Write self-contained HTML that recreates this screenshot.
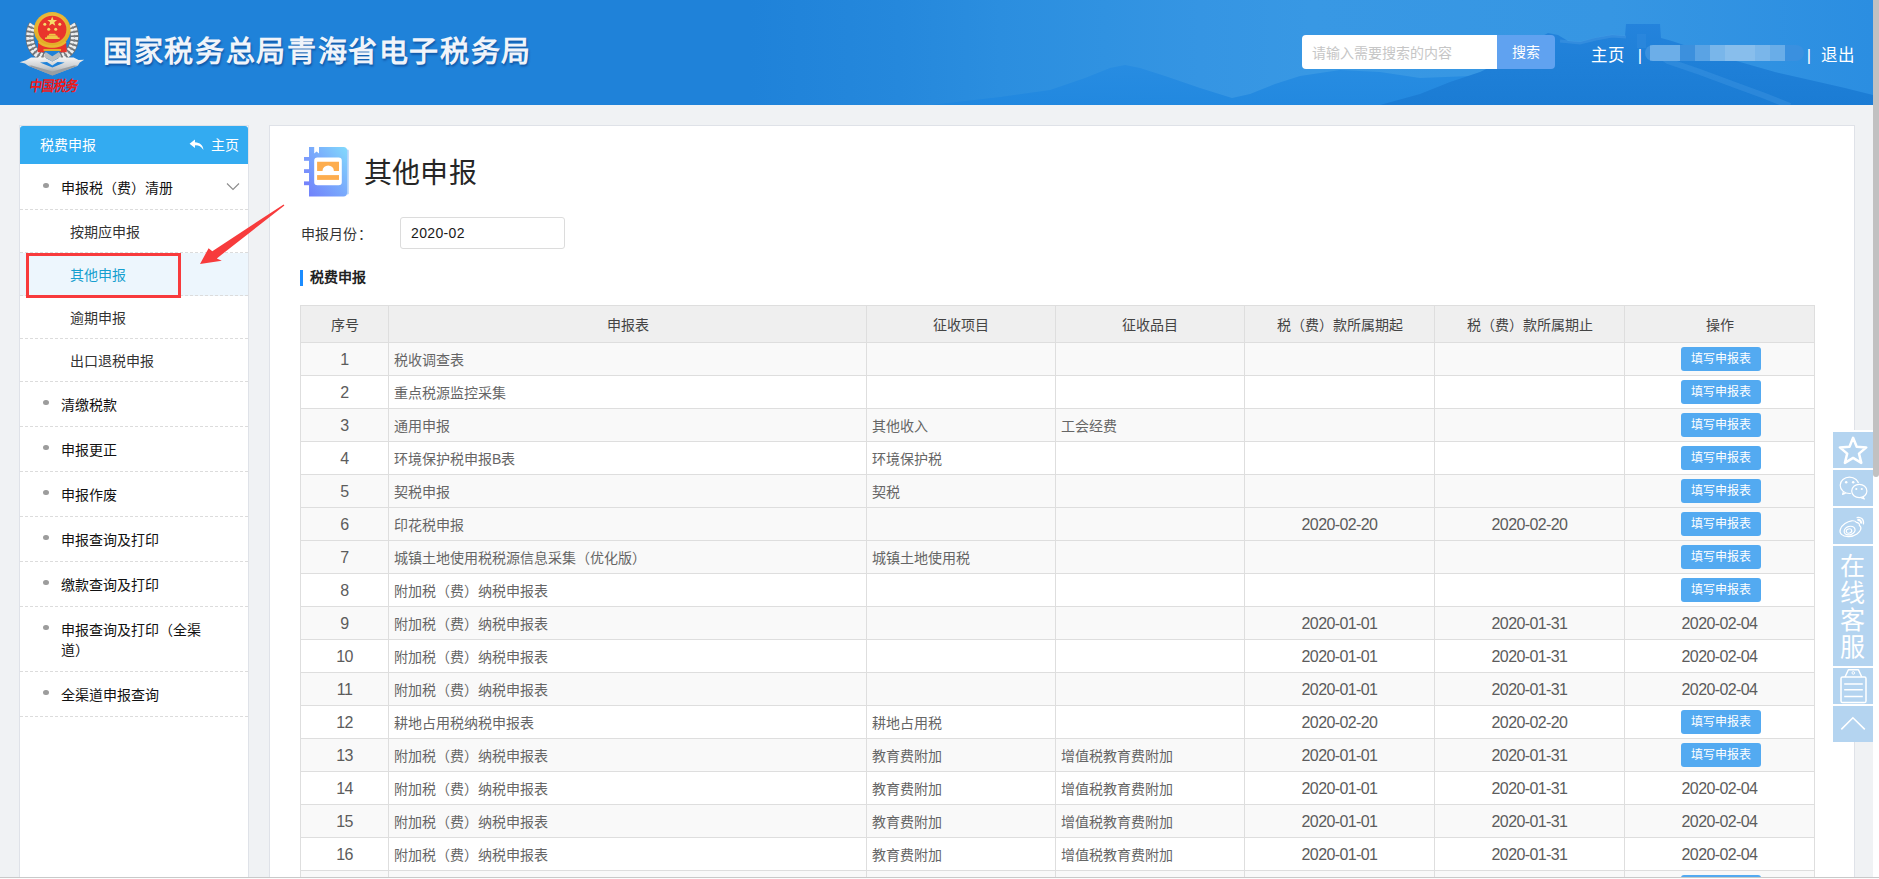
<!DOCTYPE html>
<html lang="zh-CN">
<head>
<meta charset="utf-8">
<title>国家税务总局青海省电子税务局</title>
<style>
*{box-sizing:border-box;margin:0;padding:0}
html,body{width:1879px;height:879px;overflow:hidden}
body{position:relative;background:#f0f2f4;font-family:"Liberation Sans",sans-serif;font-size:14px;color:#333}
.abs{position:absolute}
/* header */
#hd{position:absolute;left:0;top:0;width:1873px;height:105px;background:#1f82d9;overflow:hidden}
#hd svg.bg{position:absolute;left:0;top:0}
#title{position:absolute;left:103px;top:32px;height:40px;line-height:40px;font-size:29px;font-weight:bold;color:#f0f4fa;letter-spacing:1.65px;white-space:nowrap;text-shadow:1px 2px 2px rgba(0,40,110,.45)}
#sbox{position:absolute;left:1302px;top:35px;width:195px;height:34px;background:#fff;border-radius:4px 0 0 4px;color:#c6c6c6;font-size:14px;line-height:36px;padding-left:10px;white-space:nowrap}
#sbtn{position:absolute;left:1497px;top:35px;width:58px;height:34px;background:#60a2f0;border-radius:0 4px 4px 0;color:#fff;font-size:14px;line-height:35.5px;text-align:center}
.nav{position:absolute;top:43px;height:24px;line-height:24px;font-size:16.5px;color:#fff;white-space:nowrap}
/* sidebar */
#side{position:absolute;left:19px;top:125px;width:230px;height:760px;background:#fff;border:1px solid #dfe2e8}
#side .sh{position:absolute;left:0;top:0;width:228px;height:38px;background:#33abf1;color:#fff;line-height:38px;border-radius:3px 3px 0 0}
.mi{position:absolute;left:0;width:228px;border-bottom:1px dashed #dcdcdc;color:#111;white-space:nowrap}
.mi .t{position:absolute;left:40.5px;top:1px}
.mi i{position:absolute;left:23px;width:6px;height:5.4px;border-radius:50%;background:#9c9c9c}
.si{position:absolute;left:0;width:228px;height:43px;line-height:44px;border-bottom:1px dashed #dcdcdc;padding-left:50px;color:#333;white-space:nowrap}
/* content */
#main{position:absolute;left:269px;top:125px;width:1586px;height:760px;background:#fff;border:1px solid #dfe2e8}
#ptitle{position:absolute;left:364px;top:154px;height:40px;line-height:40px;font-size:28px;letter-spacing:.2px;color:#262626;white-space:nowrap;font-weight:300}
#tb{position:absolute;left:300px;top:305px;width:1515px;border-collapse:separate;border-spacing:0;table-layout:fixed;border-left:1px solid #dedede;border-top:1px solid #dedede;color:#666;font-size:14px}
#tb th,#tb td{border-right:1px solid #dedede;border-bottom:1px solid #dedede;height:33px;padding:0;font-weight:normal;white-space:nowrap;overflow:hidden;vertical-align:middle;text-align:center}
#tb th{height:37px;background:#efefef;color:#444}
#tb td.l{text-align:left;padding-left:5px}
#tb tr.o td{background:#f9f9f9}
#tb .n{font-size:16px;letter-spacing:-.6px;color:#5c5c5c;padding-top:1px}
.b{display:block;position:relative;left:1px;margin:0 auto;width:80px;height:24px;line-height:24px;background:#53aaf1;color:#fff;font-size:12px;border-radius:3px;text-align:center}
/* toolbar */
.tl{position:absolute;left:1833px;width:40px;background:#b4d4f0}
</style>
</head>
<body>
<div id="hd">
<svg class="bg" width="1873" height="105" viewBox="0 0 1873 105">
<defs>
<linearGradient id="sky" x1="0" y1="0" x2="1" y2="0">
<stop offset="0" stop-color="#1f82d9"/><stop offset=".4" stop-color="#1f82d9"/><stop offset=".48" stop-color="#2588dc"/><stop offset=".534" stop-color="#2b8edf"/><stop offset=".59" stop-color="#3092e1"/><stop offset=".64" stop-color="#3595e3"/><stop offset=".7" stop-color="#3898e4"/><stop offset=".86" stop-color="#3696e3"/><stop offset="1" stop-color="#2b8ee1"/>
</linearGradient>
<linearGradient id="mt" x1="0" y1="0" x2="0" y2="1">
<stop offset="0" stop-color="#2483dc"/><stop offset=".45" stop-color="#1f80d8"/><stop offset="1" stop-color="#1b7cd4"/>
</linearGradient>
<linearGradient id="mt2" x1="0" y1="0" x2="0" y2="1">
<stop offset="0" stop-color="#278ce2"/><stop offset="1" stop-color="#2087df"/>
</linearGradient>
</defs>
<rect width="1873" height="105" fill="url(#sky)"/>
<path d="M930 105 L1000 97 L1050 90 L1085 78 L1110 68 L1125 65 L1140 68 L1165 76 L1200 88 L1232 98 L1250 94 L1275 84 L1300 76 L1340 70 L1380 72 L1420 78 L1470 76 L1520 66 L1560 60 L1600 62 L1660 64 L1700 105 Z" fill="url(#mt2)" opacity=".9"/>
<path d="M1380 105 L1420 94 L1450 82 L1480 72 L1505 60 L1520 50 L1535 40 L1548 33 L1558 35 L1568 41 L1580 42 L1595 38 L1612 35 L1625 36 L1626 24 L1660 24 L1661 38 L1672 41 L1690 47 L1712 55 L1740 62 L1775 72 L1810 80 L1845 88 L1873 95 L1873 105 Z" fill="url(#mt)"/>
<path d="M1652 50 L1668 61 L1700 72 L1735 85 L1765 96 L1790 106" fill="none" stroke="#4b9ee6" stroke-width="6" opacity=".32"/>
<path d="M1560 41 L1580 43 L1596 39 L1612 36 L1626 37" fill="none" stroke="#5aa6e8" stroke-width="3" opacity=".3"/>
<rect x="1637" y="34" width="9" height="14" fill="#3c93e0" opacity=".3"/>
</svg>
<svg class="abs" style="left:12px;top:4px" width="80" height="96" viewBox="12 4 80 96">
<defs>
<radialGradient id="gold" cx=".5" cy=".4" r=".6"><stop offset="0" stop-color="#f7d25a"/><stop offset="1" stop-color="#dfa81f"/></radialGradient>
<linearGradient id="silv" x1="0" y1="0" x2="0" y2="1"><stop offset="0" stop-color="#f4f4f4"/><stop offset=".55" stop-color="#c9cccf"/><stop offset="1" stop-color="#8e9296"/></linearGradient>
</defs>
<g fill="none" stroke-linecap="butt">
<path d="M33 24.6 C28.4 32 28.6 45.4 35.6 52.2 C38.8 55.4 42.6 57.2 47 57.6" stroke="#6f7377" stroke-width="8.6"/>
<path d="M71.4 24.6 C76 32 75.8 45.4 68.8 52.2 C65.6 55.4 61.8 57.2 57.4 57.6" stroke="#6f7377" stroke-width="8.6"/>
<path d="M33 24.6 C28.4 32 28.6 45.4 35.6 52.2 C38.8 55.4 42.6 57.2 47 57.6" stroke="#eceeef" stroke-width="7.2" stroke-dasharray="2.6 1.7"/>
<path d="M71.4 24.6 C76 32 75.8 45.4 68.8 52.2 C65.6 55.4 61.8 57.2 57.4 57.6" stroke="#eceeef" stroke-width="7.2" stroke-dasharray="2.6 1.7"/>
<path d="M33 24.6 C28.4 32 28.6 45.4 35.6 52.2 C38.8 55.4 42.6 57.2 47 57.6" stroke="#7d8185" stroke-width="1.3" stroke-dasharray="2.6 1.7" stroke-dashoffset="2.1"/>
<path d="M71.4 24.6 C76 32 75.8 45.4 68.8 52.2 C65.6 55.4 61.8 57.2 57.4 57.6" stroke="#7d8185" stroke-width="1.3" stroke-dasharray="2.6 1.7" stroke-dashoffset="2.1"/>
</g>
<path d="M38.4 40 H66 L66.8 52.3 H60.5 L59 50.6 H45.4 L43.9 52.3 H37.6 Z" fill="#e8342b"/>
<ellipse cx="52.2" cy="29.7" rx="18.3" ry="17.6" fill="url(#gold)"/>
<ellipse cx="52.2" cy="29.4" rx="14.2" ry="13.6" fill="#e9352c"/>
<path d="M39.6 40.6 C44 46.8 60.4 46.8 64.8 40.6 L66.4 42.6 C60.6 49.6 43.8 49.6 38 42.6 Z" fill="#e9b730"/>
<path d="M43.5 49 H61 V51 H43.5 Z" fill="#e3ac2a"/>
<path d="M45 39 H59.6 V37.4 H58 L57.2 35.4 H47.4 L46.6 37.4 H45 Z M48.6 35.2 L49.4 33.8 H55.2 L56 35.2 Z" fill="#f0c545"/>
<g fill="#f6dc6a">
<path d="M52.2 16.6 L53.5 20 L57.1 20.1 L54.3 22.3 L55.3 25.8 L52.2 23.8 L49.1 25.8 L50.1 22.3 L47.3 20.1 L50.9 20 Z"/>
<circle cx="44.8" cy="24.2" r="1.5"/><circle cx="59.8" cy="24.2" r="1.5"/><circle cx="48.7" cy="29.2" r="1.5"/><circle cx="55.7" cy="29.2" r="1.5"/>
</g>
<path d="M19.6 62.2 L26 60.2 L31 57.6 L44.6 57.4 L52.3 61.6 L60 57.4 L73.6 57.6 L78.6 60 L84.2 59.8 L79.8 62.6 L77.8 65.8 L52.4 75.4 L28.2 65.8 L25 63.4 Z" fill="url(#silv)"/>
<path d="M40 62.6 L47 62 L52.3 65.4 L57.6 62 L64.6 62.6 L52.4 67.6 Z" fill="#1f82d9"/>
<path d="M28.2 65.8 L52.4 75.4 L77.8 65.8 L74 65.6 L52.4 71.6 L31.6 65.6 Z" fill="#9a9ea2"/>
<path d="M45.6 52 L52.3 56.2 L59 52 L60.6 56.8 L52.3 61.6 L44 56.8 Z" fill="#b9bdc0"/>
</svg>
<div class="abs" style="left:24px;top:75.5px;width:59px;height:20px;line-height:20px;font-size:14.5px;font-weight:700;color:#ee1a1a;letter-spacing:0;white-space:nowrap;transform:scaleX(.86) skewX(-10deg);text-align:center">中国税务</div>
<div id="title">国家税务总局青海省电子税务局</div>
<div id="sbox">请输入需要搜索的内容</div>
<div id="sbtn">搜索</div>
<div class="nav" style="left:1590.5px">主页</div>
<div class="nav" style="left:1637.8px">|</div>
<div class="abs" style="left:1645px;top:44.5px;width:159px;height:16px;border-radius:8px;background:#3a90df;overflow:hidden;filter:blur(.4px)">
<i class="abs" style="left:5px;top:0;width:29.6px;height:16px;background:#6caee8"></i>
<i class="abs" style="left:34.6px;top:0;width:15.4px;height:16px;background:#3c90dd"></i>
<i class="abs" style="left:50px;top:0;width:14.7px;height:16px;background:#5aa3e4"></i>
<i class="abs" style="left:64.7px;top:0;width:15.4px;height:16px;background:#79b6ea"></i>
<i class="abs" style="left:80.1px;top:0;width:30.1px;height:16px;background:#88beec"></i>
<i class="abs" style="left:110.2px;top:0;width:14.6px;height:16px;background:#7ab6ea"></i>
<i class="abs" style="left:124.8px;top:0;width:15.5px;height:16px;background:#69ade8"></i>
</div>
<div class="nav" style="left:1806.8px">|</div>
<div class="nav" style="left:1820.5px">退出</div>
</div>

<div id="side">
<div class="sh"><span class="abs" style="left:20px">税费申报</span>
<svg class="abs" style="left:168.6px;top:12.8px" width="15.4" height="12" viewBox="0 0 16 12.4"><path d="M6.2 0.6 L0.6 5 L6.2 9.4 V6.6 C9.8 6.4 12.6 7.6 15 11.4 C14.6 6.6 11.4 3.6 6.2 3.4 Z" fill="#fff"/></svg>
<span class="abs" style="left:191px">主页</span></div>
<div class="mi" style="top:38px;height:46px;line-height:45px"><i style="top:19px"></i><span class="t" style="top:2px">申报税（费）清册</span>
<svg class="abs" style="left:205.6px;top:18px" width="14" height="10" viewBox="0 0 14 10"><path d="M1 1.5 L7 7.5 L13 1.5" fill="none" stroke="#8c8c8c" stroke-width="1.1"/></svg></div>
<div class="si" style="top:84px">按期应申报</div>
<div class="si" style="top:127px;background:#edf6fd;color:#159fcf">其他申报</div>
<div class="si" style="top:170px">逾期申报</div>
<div class="si" style="top:213px">出口退税申报</div>
<div class="mi" style="top:256px;height:45px;line-height:44px"><i style="top:17.8px"></i><span class="t">清缴税款</span></div>
<div class="mi" style="top:301px;height:45px;line-height:44px"><i style="top:17.8px"></i><span class="t">申报更正</span></div>
<div class="mi" style="top:346px;height:45px;line-height:44px"><i style="top:17.8px"></i><span class="t">申报作废</span></div>
<div class="mi" style="top:391px;height:45px;line-height:44px"><i style="top:17.8px"></i><span class="t">申报查询及打印</span></div>
<div class="mi" style="top:436px;height:45px;line-height:44px"><i style="top:17.8px"></i><span class="t">缴款查询及打印</span></div>
<div class="mi" style="top:481px;height:65px;line-height:20px"><i style="top:17.8px"></i><span class="t" style="top:13px">申报查询及打印（全渠<br>道）</span></div>
<div class="mi" style="top:546px;height:45px;line-height:44px"><i style="top:17.8px"></i><span class="t">全渠道申报查询</span></div>
</div>
<div class="abs" style="left:26px;top:253px;width:155px;height:45px;border:3px solid #f83a3c;z-index:5"></div>
<svg class="abs" style="left:195px;top:198px;z-index:5" width="95" height="72" viewBox="195 198 95 72"><path d="M283.6 204.4 L284.4 205.4 L216.8 258.4 L221.8 260.8 L200 264 L208.6 248.2 L212.3 251.2 Z" fill="#f73b3c"/></svg>

<div id="main"></div>
<svg class="abs" style="left:300px;top:144px" width="52" height="56" viewBox="300 144 52 56">
<defs><linearGradient id="nb" x1="1" y1="0" x2="0" y2="1"><stop offset="0" stop-color="#82dafc"/><stop offset=".45" stop-color="#7aaefc"/><stop offset="1" stop-color="#7182fb"/></linearGradient></defs>
<rect x="346" y="149.5" width="2.8" height="45" rx="1.2" fill="#b4d3fb"/>
<path d="M309 147 H343.5 A3.6 3.6 0 0 1 347.1 150.6 V192.8 A3.6 3.6 0 0 1 343.5 196.4 H309 Z" fill="url(#nb)"/>
<rect x="304" y="157" width="6" height="3.8" fill="#7b9cfc"/><rect x="304" y="169.2" width="6" height="3.8" fill="#7890fc"/><rect x="304" y="181.4" width="6" height="3.8" fill="#7584fc"/>
<path d="M314.2 146.6 H319 V153.4 L316.6 151.6 L314.2 153.4 Z" fill="#fff"/>
<rect x="314.2" y="157.6" width="27.6" height="27.6" rx="3.2" fill="#fff"/>
<path d="M317.1 161.8 H339 V171.1 H333.9 A5.7 5.7 0 0 0 322.5 171.1 H317.1 Z" fill="#fdad4e"/>
<rect x="317.1" y="175.1" width="21.9" height="4.8" fill="#fdad4e"/>
</svg>
<div id="ptitle">其他申报</div>
<div class="abs" style="left:300.5px;top:224px;line-height:20px;color:#333;white-space:nowrap;letter-spacing:.3px">申报月份：</div>
<div class="abs" style="left:400px;top:217px;width:165px;height:32px;border:1px solid #dcdcdc;border-radius:3px;background:#fff;line-height:30px;padding-left:10px;color:#1a1a1a;letter-spacing:.35px">2020-02</div>
<div class="abs" style="left:300px;top:270px;width:3px;height:16px;background:#1b8cff"></div>
<div class="abs" style="left:310px;top:267px;line-height:20px;font-weight:bold;color:#222;white-space:nowrap">税费申报</div>

<table id="tb">
<colgroup><col style="width:88px"><col style="width:478px"><col style="width:189px"><col style="width:189px"><col style="width:190px"><col style="width:190px"><col style="width:190px"></colgroup>
<tr><th>序号</th><th>申报表</th><th>征收项目</th><th>征收品目</th><th>税（费）款所属期起</th><th>税（费）款所属期止</th><th>操作</th></tr>
<tr class="o"><td class="n">1</td><td class="l">税收调查表</td><td class="l"></td><td class="l"></td><td class="n"></td><td class="n"></td><td><span class="b">填写申报表</span></td></tr>
<tr><td class="n">2</td><td class="l">重点税源监控采集</td><td class="l"></td><td class="l"></td><td class="n"></td><td class="n"></td><td><span class="b">填写申报表</span></td></tr>
<tr class="o"><td class="n">3</td><td class="l">通用申报</td><td class="l">其他收入</td><td class="l">工会经费</td><td class="n"></td><td class="n"></td><td><span class="b">填写申报表</span></td></tr>
<tr><td class="n">4</td><td class="l">环境保护税申报B表</td><td class="l">环境保护税</td><td class="l"></td><td class="n"></td><td class="n"></td><td><span class="b">填写申报表</span></td></tr>
<tr class="o"><td class="n">5</td><td class="l">契税申报</td><td class="l">契税</td><td class="l"></td><td class="n"></td><td class="n"></td><td><span class="b">填写申报表</span></td></tr>
<tr class="o"><td class="n">6</td><td class="l">印花税申报</td><td class="l"></td><td class="l"></td><td class="n">2020-02-20</td><td class="n">2020-02-20</td><td><span class="b">填写申报表</span></td></tr>
<tr class="o"><td class="n">7</td><td class="l">城镇土地使用税税源信息采集（优化版）</td><td class="l">城镇土地使用税</td><td class="l"></td><td class="n"></td><td class="n"></td><td><span class="b">填写申报表</span></td></tr>
<tr><td class="n">8</td><td class="l">附加税（费）纳税申报表</td><td class="l"></td><td class="l"></td><td class="n"></td><td class="n"></td><td><span class="b">填写申报表</span></td></tr>
<tr class="o"><td class="n">9</td><td class="l">附加税（费）纳税申报表</td><td class="l"></td><td class="l"></td><td class="n">2020-01-01</td><td class="n">2020-01-31</td><td class="n">2020-02-04</td></tr>
<tr><td class="n">10</td><td class="l">附加税（费）纳税申报表</td><td class="l"></td><td class="l"></td><td class="n">2020-01-01</td><td class="n">2020-01-31</td><td class="n">2020-02-04</td></tr>
<tr class="o"><td class="n">11</td><td class="l">附加税（费）纳税申报表</td><td class="l"></td><td class="l"></td><td class="n">2020-01-01</td><td class="n">2020-01-31</td><td class="n">2020-02-04</td></tr>
<tr><td class="n">12</td><td class="l">耕地占用税纳税申报表</td><td class="l">耕地占用税</td><td class="l"></td><td class="n">2020-02-20</td><td class="n">2020-02-20</td><td><span class="b">填写申报表</span></td></tr>
<tr class="o"><td class="n">13</td><td class="l">附加税（费）纳税申报表</td><td class="l">教育费附加</td><td class="l">增值税教育费附加</td><td class="n">2020-01-01</td><td class="n">2020-01-31</td><td><span class="b">填写申报表</span></td></tr>
<tr><td class="n">14</td><td class="l">附加税（费）纳税申报表</td><td class="l">教育费附加</td><td class="l">增值税教育费附加</td><td class="n">2020-01-01</td><td class="n">2020-01-31</td><td class="n">2020-02-04</td></tr>
<tr class="o"><td class="n">15</td><td class="l">附加税（费）纳税申报表</td><td class="l">教育费附加</td><td class="l">增值税教育费附加</td><td class="n">2020-01-01</td><td class="n">2020-01-31</td><td class="n">2020-02-04</td></tr>
<tr><td class="n">16</td><td class="l">附加税（费）纳税申报表</td><td class="l">教育费附加</td><td class="l">增值税教育费附加</td><td class="n">2020-01-01</td><td class="n">2020-01-31</td><td class="n">2020-02-04</td></tr>
<tr class="o"><td class="n">17</td><td class="l">附加税（费）纳税申报表</td><td class="l">地方教育附加</td><td class="l">增值税地方教育附加</td><td class="n">2020-01-01</td><td class="n">2020-01-31</td><td><span class="b">填写申报表</span></td></tr>
</table>

<div class="abs" style="left:1833px;top:430px;width:40px;height:312px;background:#fff"></div>
<div class="tl" style="top:432px;height:36px"><svg width="40" height="36" viewBox="0 0 40 36"><path d="M20.1 5.8 L23.7 14.7 L33.3 15.4 L26.0 21.6 L28.3 30.9 L20.1 25.9 L11.9 30.9 L14.2 21.6 L6.9 15.4 L16.5 14.7 Z" fill="none" stroke="#fff" stroke-width="2.5" stroke-linejoin="round"/></svg></div>
<div class="tl" style="top:470px;height:36px"><svg width="40" height="36" viewBox="0 0 40 36" fill="none" stroke="#fff" stroke-width="1.2">
<path d="M10.4 21.6 L9.6 24.4 L12.6 23.2" stroke-linejoin="round"/>
<ellipse cx="16.5" cy="15.3" rx="9.3" ry="8.2" fill="#b4d4f0"/>
<ellipse cx="26.3" cy="21" rx="8.9" ry="8" fill="#b4d4f0" stroke="none"/>
<path d="M29.6 26.4 L31.4 29 L27.8 27.6" stroke-linejoin="round"/>
<ellipse cx="26.3" cy="21" rx="7.6" ry="6.7" fill="#b4d4f0"/>
<g fill="#fff" stroke="none"><circle cx="13.2" cy="12.2" r="1.25"/><circle cx="20.2" cy="12.2" r="1.25"/><circle cx="23.3" cy="19" r="1.1"/><circle cx="28.8" cy="19" r="1.1"/></g>
</svg></div>
<div class="tl" style="top:508px;height:36px"><svg width="40" height="36" viewBox="0 0 40 36" fill="none" stroke="#fff" stroke-width="1.2">
<path d="M23.4 14.4 C21.4 11.6 16.4 12.6 12 15.6 C7.2 19 5.6 23.6 8.4 26.4 C11.6 29.6 19 29.4 24 26 C28 23.2 29.2 19.4 26.4 17.6 C26.8 16.2 26 14.8 23.4 14.4 Z"/>
<ellipse cx="16.6" cy="22.6" rx="5.6" ry="4.2" transform="rotate(-18 16.6 22.6)"/>
<ellipse cx="16" cy="23" rx="2.8" ry="2.1" transform="rotate(-18 16 23)"/>
<path d="M23.6 9.6 C28 8.4 31.4 11.6 30.4 16.4"/>
<path d="M24.4 12 C26.8 11.4 28.6 13.2 28 15.6" stroke-width="2"/>
</svg></div>
<div class="tl" style="top:546px;height:120px;color:#fff;font-size:25px;line-height:27.3px;text-align:center;padding-top:6.5px;padding-right:1px;font-weight:300">在<br>线<br>客<br>服</div>
<div class="tl" style="top:668px;height:36px"><svg width="40" height="36" viewBox="0 0 40 36" fill="none" stroke="#fff" stroke-width="1.5">
<rect x="8" y="9" width="25" height="25.6" rx="1.6"/>
<path d="M12 9 L15.4 1.8 H25.4 L28.8 9" stroke-linejoin="round"/>
<circle cx="20.3" cy="4.9" r="1.3" stroke-width="1"/>
<path d="M11.2 16 H29.8 M11.2 21.8 H29.8 M11.2 28.6 H29.8"/>
</svg></div>
<div class="tl" style="top:706px;height:36px"><svg width="40" height="36" viewBox="0 0 40 36" fill="none" stroke="#fff" stroke-width="1.6"><path d="M8.3 23.4 L19.9 11.8 L31.8 23.4"/></svg></div>

<div class="abs" style="left:1873px;top:0;width:6px;height:879px;background:#fff"></div>
<div class="abs" style="left:1873px;top:-4px;width:6px;height:481px;background:#c1c1c1;border-radius:3px"></div>
<div class="abs" style="left:0;top:877px;width:1879px;height:1px;background:#c9c9c9"></div>
<div class="abs" style="left:0;top:878px;width:1879px;height:1px;background:#fdfdfd"></div>

</body>
</html>
